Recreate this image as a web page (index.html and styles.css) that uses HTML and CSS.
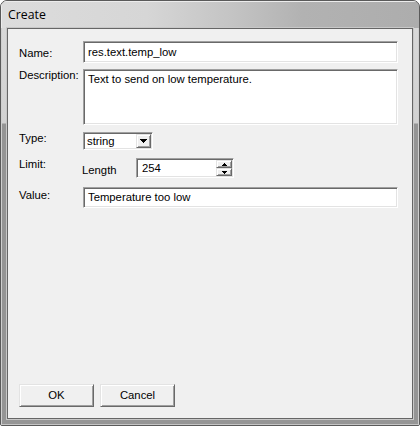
FILE: index.html
```html
<!DOCTYPE html>
<html>
<head>
<meta charset="utf-8">
<title>Create</title>
<link rel="stylesheet" href="styles.css">
</head>
<body>
<div class="window">
  <div class="titlebar">Create</div>
  <div class="frame">
    <div class="client">
      <div class="row row-name">
        <div class="lbl lbl-name">Name:</div>
        <div class="sunken edit">res.text.temp_low</div>
      </div>
      <div class="row row-desc">
        <div class="lbl">Description:</div>
        <div class="sunken memo">Text to send on low temperature.</div>
      </div>
      <div class="row row-type">
        <div class="lbl">Type:</div>
        <div class="sunken combo">
          <span class="combo-text">string</span>
          <span class="raised combo-btn">
            <svg width="7" height="4" viewBox="0 0 7 4" shape-rendering="crispEdges"><rect x="0" y="0" width="7" height="1" fill="#000"/><rect x="1" y="1" width="5" height="1" fill="#000"/><rect x="2" y="2" width="3" height="1" fill="#000"/><rect x="3" y="3" width="1" height="1" fill="#000"/></svg>
          </span>
        </div>
      </div>
      <div class="row row-limit">
        <div class="lbl">Limit:</div>
        <div class="sublbl">Length</div>
        <div class="sunken spin">
          <span class="spin-text">254</span>
          <span class="spin-btns">
            <span class="raised spin-btn">
              <svg width="5" height="3" viewBox="0 0 5 3" shape-rendering="crispEdges"><rect x="2" y="0" width="1" height="1" fill="#000"/><rect x="1" y="1" width="3" height="1" fill="#000"/><rect x="0" y="2" width="5" height="1" fill="#000"/></svg>
            </span>
            <span class="raised spin-btn">
              <svg width="5" height="3" viewBox="0 0 5 3" shape-rendering="crispEdges"><rect x="0" y="0" width="5" height="1" fill="#000"/><rect x="1" y="1" width="3" height="1" fill="#000"/><rect x="2" y="2" width="1" height="1" fill="#000"/></svg>
            </span>
          </span>
        </div>
      </div>
      <div class="row row-value">
        <div class="lbl lbl-value">Value:</div>
        <div class="sunken edit edit-value">Temperature too low</div>
      </div>
      <div class="buttons">
        <div class="raised button">OK</div>
        <div class="raised button">Cancel</div>
      </div>
    </div>
  </div>
</div>
</body>
</html>
```
FILE: styles.css
```css
html, body {
  margin: 0;
  padding: 0;
  background: #ffffff;
}
body {
  font-family: "Liberation Sans", Arial, sans-serif;
  font-size: 11.3px;
  line-height: 13px;
  color: #000;
}
.window {
  width: 420px;
  height: 426px;
  box-sizing: border-box;
  border: 1px solid #5a5a5a;
  border-radius: 7px 7px 2px 2px;
  overflow: hidden;
  display: flex;
  flex-direction: column;
  background: #9a9a9a;
}
.titlebar {
  flex: none;
  height: 27px;
  box-sizing: border-box;
  padding: 6px 0 0 7px;
  font-family: "Open Sans", "Liberation Sans", sans-serif;
  font-size: 12.3px;
  line-height: 16px;
  color: #000;
  background: linear-gradient(to right, #dcdcdc 0%, #d6d6d6 35%, #c4c4c4 55%, #b2b2b2 72%, #adadad 100%);
  box-shadow: inset 1px 1px #ececec;
}
.frame {
  flex: 1;
  display: flex;
  padding: 0 6px 6px;
  background: linear-gradient(to bottom, #d8d8d8 0, #d2d2d2 95px, #959595 96px, #959595 100%);
  box-shadow: inset 1px 0 #cfcfcf, inset -1px 0 #cfcfcf, inset 0 -1px #c4c4c4;
}
.client {
  flex: 1;
  display: flex;
  flex-direction: column;
  border: 1px solid #666666;
  background: #f0f0f0;
  padding: 0 14px 11px 11px;
  box-shadow: 0 0 0 1px #c8c8c8;
}
.row {
  display: flex;
  align-items: flex-start;
}
.lbl {
  flex: none;
  width: 64px;
}
.row-name { margin-top: 12px; }
.lbl-name { padding-top: 6px; }
.row-desc { margin-top: 6px; }
.row-type { margin-top: 7px; }
.row-limit { margin-top: 8px; }
.row-value { margin-top: 9px; }
.lbl-value { padding-top: 2px; }

.sunken {
  box-sizing: border-box;
  background: #fff;
  border: 1px solid;
  border-color: #a0a0a0 #ffffff #ffffff #a0a0a0;
  box-shadow: inset 1px 1px #696969, inset -1px -1px #e3e3e3;
}
.raised {
  box-sizing: border-box;
  background: #f0f0f0;
  border: 1px solid;
  border-color: #e3e3e3 #696969 #696969 #e3e3e3;
  box-shadow: inset 1px 1px #ffffff, inset -1px -1px #a0a0a0;
}
.edit {
  flex: 1;
  height: 22px;
  display: flex;
  align-items: center;
  padding: 0 4px;
}
.edit-value { height: 21px; }
.memo {
  flex: 1;
  height: 56px;
  padding: 3px 4px;
}
.combo {
  width: 70px;
  height: 18px;
  display: flex;
  align-items: center;
}
.combo-text {
  flex: 1;
  padding-left: 3px;
}
.combo-btn {
  flex: none;
  width: 15px;
  height: 14px;
  margin: 1px;
  display: flex;
  align-items: center;
  justify-content: center;
}
.sublbl {
  flex: none;
  width: 54px;
  margin-left: -1px;
  padding-top: 6px;
}
.spin {
  width: 98px;
  height: 20px;
  display: flex;
  align-items: center;
}
.spin-text {
  flex: 1;
  padding-left: 5px;
}
.spin-btns {
  flex: none;
  align-self: stretch;
  display: flex;
  flex-direction: column;
  width: 16px;
  margin: 1px 1px 1px 0;
}
.spin-btn {
  flex: 1;
  display: flex;
  align-items: center;
  justify-content: center;
}
.buttons {
  margin-top: auto;
  display: flex;
  gap: 6px;
}
.button {
  width: 75px;
  height: 23px;
  display: flex;
  align-items: center;
  justify-content: center;
}
```
